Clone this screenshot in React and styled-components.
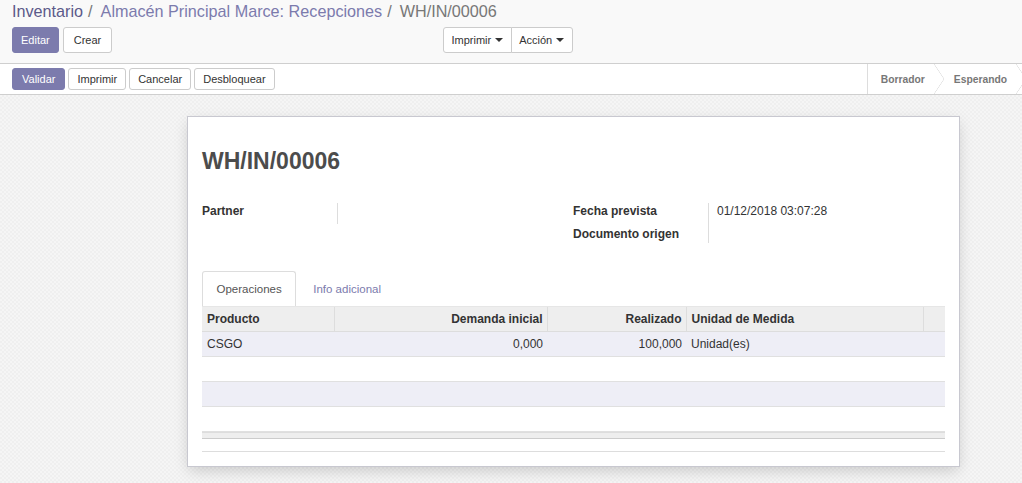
import styled, { createGlobalStyle } from "styled-components";

const GlobalStyle = createGlobalStyle`
  html, body {
    margin: 0;
    padding: 0;
    height: 100%;
  }
  body {
    font-family: "Liberation Sans", Arial, sans-serif;
    font-size: 12px;
    color: #4c4c4c;
    background: #fff;
  }
  #root {
    height: 100%;
  }
`;

const Page = styled.div`
  display: flex;
  flex-direction: column;
  height: 100%;
`;

const ControlPanel = styled.div`
  background-color: #f9f9f9;
  border-bottom: 1px solid #cfcfcf;
  padding: 0 12px 9px 12px;
  height: 54px;
`;

const Breadcrumb = styled.div`
  font-size: 16.2px;
  line-height: 22px;
  color: #777;
  margin-bottom: 5px;
  a {
    color: #7c7bad;
    text-decoration: none;
  }
  a:first-child {
    color: #5c5a8a;
  }
  span.sep {
    color: #777;
    margin: 0 8px 0 5px;
  }
`;

const ButtonRow = styled.div`
  display: flex;
  align-items: center;
`;

const Left = styled.div`
  display: flex;
  gap: 4px;
  width: 431px;
`;

const Button = styled.button`
  font-family: inherit;
  font-size: 11px;
  height: ${(p) => p.$h || 26}px;
  padding: 0 ${(p) => p.$px || 8}px;
  border-radius: 3px;
  border: 1px solid ${(p) => (p.$primary ? "#7c7bad" : "#ccc")};
  background: ${(p) => (p.$primary ? "#7c7bad" : "#fff")};
  color: ${(p) => (p.$primary ? "#fff" : "#333")};
  display: inline-flex;
  align-items: center;
  cursor: pointer;
`;

const Group = styled.div`
  display: flex;
  & > button {
    border-radius: 0;
  }
  & > button:first-child {
    border-radius: 3px 0 0 3px;
  }
  & > button:last-child {
    border-radius: 0 3px 3px 0;
    margin-left: -1px;
  }
`;

const Caret = styled.span`
  display: inline-block;
  width: 0;
  height: 0;
  margin-left: 4px;
  border-top: 4px solid #333;
  border-left: 4px solid transparent;
  border-right: 4px solid transparent;
`;

const StatusBar = styled.div`
  display: flex;
  align-items: center;
  justify-content: space-between;
  height: 30px;
  border-bottom: 1px solid #cfcfcf;
  background: #fff;
  padding-left: 12px;
`;

const StatusButtons = styled.div`
  display: flex;
  gap: 3px;
`;

const Stages = styled.div`
  display: flex;
  height: 100%;
  border-left: 1px solid #ddd;
`;

const Stage = styled.div`
  position: relative;
  display: flex;
  align-items: center;
  padding: 0 ${(p) => p.$pr}px 0 ${(p) => p.$pl}px;
  font-size: 10.3px;
  font-weight: bold;
  color: #777;
  &::after {
    content: "";
    position: absolute;
    right: ${(p) => p.$ar}px;
    top: 0;
    width: 10px;
    height: 30px;
    background: linear-gradient(to top right, transparent 47%, #ddd 50%, transparent 54%) top / 100% 50% no-repeat,
      linear-gradient(to bottom right, transparent 47%, #ddd 50%, transparent 54%) bottom / 100% 50% no-repeat;
  }
`;

const Content = styled.div`
  flex: 1;
  background-color: #f5f5f5;
  background-image: linear-gradient(45deg, #efefef 25%, transparent 25%, transparent 75%, #efefef 75%),
    linear-gradient(45deg, #efefef 25%, transparent 25%, transparent 75%, #efefef 75%);
  background-size: 4px 4px;
  background-position: 0 0, 2px 2px;
  padding: 21px 0 0 187px;
  overflow: hidden;
`;

const Sheet = styled.div`
  width: 743px;
  background: #fff;
  border: 1px solid #c8c8d0;
  box-shadow: 0 5px 14px -2px rgba(0, 0, 0, 0.18);
  padding: 0 14px 14px 14px;
`;

const Title = styled.h1`
  margin: 31px 0 0 0;
  font-size: 23px;
  line-height: 26px;
  font-weight: bold;
  color: #4c4c4c;
`;

const Fields = styled.div`
  display: flex;
  margin-top: 29px;
  height: 49px;
`;

const FieldGroup = styled.div`
  display: grid;
  grid-template-columns: ${(p) => p.$label}px 1fr;
  align-content: start;
  width: ${(p) => p.$w}px;
`;

const Label = styled.div`
  font-weight: bold;
  font-size: 12px;
  color: #333;
  border-right: 1px solid #ddd;
  line-height: 16px;
  height: ${(p) => p.$h}px;
`;

const Value = styled.div`
  padding-left: 8px;
  font-size: 12px;
  color: #333;
  line-height: 16px;
  height: ${(p) => p.$h}px;
`;

const Tabs = styled.div`
  display: flex;
  margin-top: 19px;
  height: 35px;
  border-bottom: 1px solid #e6e6e6;
`;

const Tab = styled.div`
  padding: 0 ${(p) => (p.$active ? 13.5 : 16)}px;
  display: flex;
  align-items: center;
  font-size: 11.5px;
  color: ${(p) => (p.$active ? "#555" : "#7c7bad")};
  border: 1px solid ${(p) => (p.$active ? "#ddd" : "transparent")};
  border-bottom: none;
  border-radius: 3px 3px 0 0;
  background: #fff;
  height: 35px;
  box-sizing: border-box;
  margin-bottom: -1px;
`;

const Table = styled.table`
  width: 743px;
  border-collapse: collapse;
  font-size: 12px;
  color: #333;
  th {
    background: #eee;
    font-weight: bold;
    height: 24px;
    padding: 0 4px 0 5px;
    border-left: 1px solid #ddd;
    border-bottom: 1px solid #ddd;
    text-align: left;
  }
  th:first-child {
    border-left: none;
  }
  td {
    height: 24px;
    padding: 0 4px 0 5px;
    border-bottom: 1px solid #e0e0e0;
  }
  tbody tr:nth-child(odd) td {
    background: #eeeef6;
  }
  .num {
    text-align: right;
  }
`;

const Footer = styled.div`
  width: 743px;
  height: 5px;
  background: #eee;
  border-top: 1px solid #ddd;
  border-bottom: 1px solid #ccc;
`;

const BottomLine = styled.div`
  width: 743px;
  height: 12px;
  border-bottom: 1px solid #ddd;
`;

const rows = [
  { product: "CSGO", demand: "0,000", done: "100,000", uom: "Unidad(es)" },
  {},
  {},
  {},
];

export default function App() {
  return (
    <Page>
      <GlobalStyle />
      <ControlPanel>
        <Breadcrumb>
          <a>Inventario</a>
          <span className="sep">/</span>
          <a>Almacén Principal Marce: Recepciones</a>
          <span className="sep">/</span>
          WH/IN/00006
        </Breadcrumb>
        <ButtonRow>
          <Left>
            <Button $primary>Editar</Button>
            <Button $px={10}>Crear</Button>
          </Left>
          <Group>
            <Button $px={7.5}>
              Imprimir <Caret />
            </Button>
            <Button $px={7.5}>
              Acción <Caret />
            </Button>
          </Group>
        </ButtonRow>
      </ControlPanel>
      <StatusBar>
        <StatusButtons>
          <Button $primary $h={22} $px={9}>Validar</Button>
          <Button $h={22}>Imprimir</Button>
          <Button $h={22}>Cancelar</Button>
          <Button $h={22}>Desbloquear</Button>
        </StatusButtons>
        <Stages>
          <Stage $pl={13} $pr={18} $ar={-1}>Borrador</Stage>
          <Stage $pl={11} $pr={15} $ar={-4}>Esperando</Stage>
        </Stages>
      </StatusBar>
      <Content>
        <Sheet>
          <Title>WH/IN/00006</Title>
          <Fields>
            <FieldGroup $label={136} $w={371}>
              <Label $h={21}>Partner</Label>
              <Value $h={21}></Value>
            </FieldGroup>
            <FieldGroup $label={136} $w={372}>
              <Label $h={23}>Fecha prevista</Label>
              <Value $h={23}>01/12/2018 03:07:28</Value>
              <Label $h={17}>Documento origen</Label>
              <Value $h={17}></Value>
            </FieldGroup>
          </Fields>
          <Tabs>
            <Tab $active>Operaciones</Tab>
            <Tab>Info adicional</Tab>
          </Tabs>
          <Table>
            <colgroup>
              <col style={{ width: 132 }} />
              <col style={{ width: 213 }} />
              <col style={{ width: 139 }} />
              <col style={{ width: 237 }} />
              <col style={{ width: 22 }} />
            </colgroup>
            <thead>
              <tr>
                <th>Producto</th>
                <th className="num">Demanda inicial</th>
                <th className="num">Realizado</th>
                <th>Unidad de Medida</th>
                <th></th>
              </tr>
            </thead>
            <tbody>
              {rows.map((r, i) => (
                <tr key={i}>
                  <td>{r.product}</td>
                  <td className="num">{r.demand}</td>
                  <td className="num">{r.done}</td>
                  <td>{r.uom}</td>
                  <td></td>
                </tr>
              ))}
            </tbody>
          </Table>
          <Footer />
          <BottomLine />
        </Sheet>
      </Content>
    </Page>
  );
}
